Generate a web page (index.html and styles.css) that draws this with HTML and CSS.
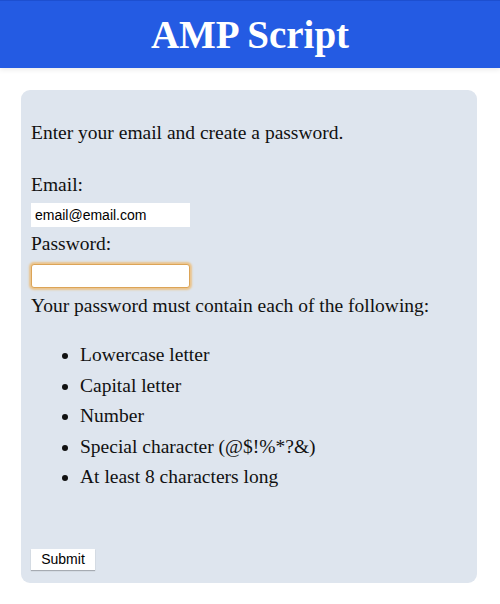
FILE: index.html
```html
<!DOCTYPE html>
<html>
<head>
<meta charset="utf-8">
<link rel="stylesheet" href="styles.css">
</head>
<body>
<header class="top">
  <h1 class="title">AMP Script</h1>
</header>
<main class="card">
  <p class="intro">Enter your email and create a password.</p>
  <label class="lbl">Email:</label>
  <input class="field" type="text" value="email@email.com">
  <label class="lbl">Password:</label>
  <input class="field focus" type="password">
  <p class="rule">Your password must contain each of the following:</p>
  <ul class="reqs">
    <li>Lowercase letter</li>
    <li>Capital letter</li>
    <li>Number</li>
    <li>Special character (@$!%*?&amp;)</li>
    <li>At least 8 characters long</li>
  </ul>
  <button class="submit" type="button">Submit</button>
</main>
</body>
</html>
```
FILE: styles.css
```css
html, body {
  margin: 0;
  padding: 0;
  background: #fff;
  font-family: "Liberation Serif", "Times New Roman", serif;
  font-size: 19.5px;
  color: #111;
}
.top {
  background: #245be3;
  height: 68px;
  display: flex;
  align-items: center;
  justify-content: center;
  box-shadow: 0 2px 5px rgba(0,0,0,0.08);
  border-top: 1px solid #1d4fd0;
  box-sizing: border-box;
}
.title {
  margin: 0;
  color: #fff;
  font-size: 39px;
  font-weight: bold;
}
.card {
  margin: 22px 23px 0 21px;
  background: #dee5ee;
  border-radius: 9px;
  padding: 12px 10px 13px 10px;
  display: flex;
  flex-direction: column;
  align-items: flex-start;
}
.intro {
  margin: 20px 0 30px 0;
  line-height: 22px;
}
.lbl {
  line-height: 22px;
  display: block;
}
.field {
  width: 159px;
  height: 24px;
  box-sizing: border-box;
  border: none;
  background: #fff;
  font-family: "Liberation Sans", Arial, sans-serif;
  font-size: 14px;
  padding: 0 4px;
  margin: 7px 0 6px 0;
  color: #000;
}
.focus {
  border: 1px solid #dca457;
  box-shadow: 0 0 2px 2px #ebc48c;
  border-radius: 3px;
  margin: 9px 0 7px 0;
}
.rule {
  margin: 0 0 23px 0;
  line-height: 22px;
}
.reqs {
  margin: 0;
  padding-left: 49px;
  line-height: 30.5px;
}
.submit {
  margin-top: 56px;
  font-family: "Liberation Sans", Arial, sans-serif;
  font-size: 14px;
  background: #fff;
  border: none;
  box-shadow: 0 1px 1px rgba(0,0,0,0.25);
  width: 64px;
  height: 21px;
  padding: 0;
  color: #000;
}
```
